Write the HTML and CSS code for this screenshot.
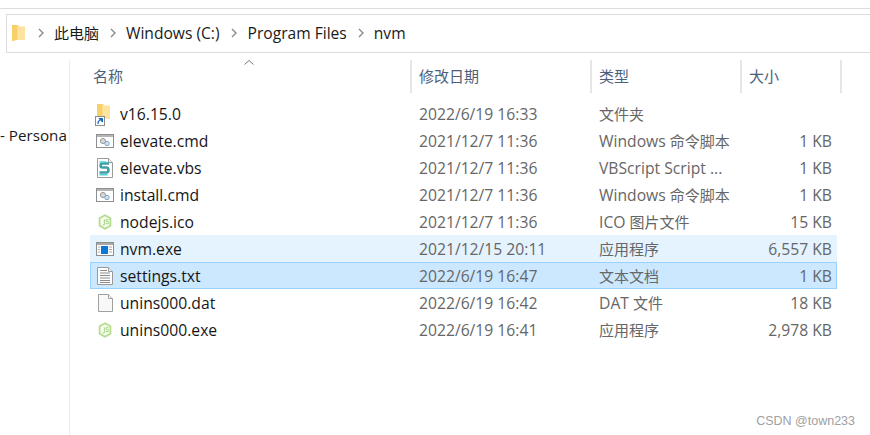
FILE: index.html
```html
<!DOCTYPE html>
<html lang="zh-CN">
<head>
<meta charset="utf-8">
<title>nvm</title>
<link rel="stylesheet" href="styles.css">
</head>
<body>
<svg class="defs" width="0" height="0">
  <symbol id="folder" viewBox="0 0 13 16">
    <path d="M0 0h6l1.500 1.500H13V15H0z" fill="#fcdf8e"/>
    <path d="M0 0h5.500v14.500L1.500 16H0z" fill="#f8cf68"/>
    <path d="M5.500 2H13v13H5.500z" fill="#fde3a0"/>
  </symbol>
  <symbol id="cmd" viewBox="0 0 18 16">
    <rect x="0.500" y="1.500" width="17" height="13" fill="#fff" stroke="#8e8e8e"/>
    <rect x="1" y="2" width="16" height="2" fill="#b5b5b5"/>
    <circle cx="7" cy="8" r="2.600" fill="#d8d8d8" stroke="#9a9a9a"/>
    <circle cx="11" cy="10.500" r="2.200" fill="#cfe3f3" stroke="#7fa9cc"/>
  </symbol>
  <symbol id="vbs" viewBox="0 0 16 20">
    <path d="M.5.500h11l4 4v15H.5z" fill="#fff" stroke="#9a9a9a"/>
    <path d="M11.500.5v4h4" fill="#eee" stroke="#9a9a9a"/>
    <path d="M12 5.500H5.500C3 5.500 3 9.500 5.500 9.500h4c2.500 0 2.500 5 0 5H2.500" fill="none" stroke="#3f9ea3" stroke-width="2.600"/>
    <path d="M2.500 4h7M2.500 16.800h8" stroke="#4fd0d4" stroke-width="1.500"/>
  </symbol>
  <symbol id="node" viewBox="0 0 16 18">
    <path d="M8 1.200l6.200 3.600v8.400L8 16.800l-6.200-3.600V4.800z" fill="#f7fbf2" stroke="#b2dc8e" stroke-width="2"/>
    <path d="M7.300 6v5.500c0 1-1.300 1.200-2 .5" fill="none" stroke="#a9d884" stroke-width="1.200"/>
    <path d="M12 6.800c-.8-1-3-1-3 .5s3 1 3 2.500-2.300 1.500-3 .5" fill="none" stroke="#a9d884" stroke-width="1.200"/>
  </symbol>
  <symbol id="exe" viewBox="0 0 18 16">
    <rect x="0.500" y="1.500" width="17" height="13" fill="#fff" stroke="#8e8e8e"/>
    <rect x="1" y="2" width="16" height="2" fill="#a8a8a8"/>
    <rect x="5" y="5" width="7" height="8" fill="#0a78d7"/>
    <path d="M2 6h2M2 8.500h2M2 11h2M13 6h3M13 8.500h3M13 11h3" stroke="#aaa"/>
  </symbol>
  <symbol id="txt" viewBox="0 0 16 18">
    <path d="M.5.500h11l4 4v13H.5z" fill="#fff" stroke="#9a9a9a"/>
    <path d="M11.500.5v4h4" fill="#eee" stroke="#9a9a9a"/>
    <path d="M3 3.500h7M3 6h10M3 8.500h10M3 11h10M3 13.500h10M3 15.500h10" stroke="#8a8a8a"/>
  </symbol>
  <symbol id="blank" viewBox="0 0 15 18">
    <path d="M.5.500h10l4 4v13H.5z" fill="#f8f8f8" stroke="#a0a0a0"/>
    <path d="M10.500.5v4h4" fill="#f2f2f2" stroke="#a0a0a0"/>
  </symbol>
</svg>

<div class="window">
  <div class="topline"></div>
  <nav class="address">
    <svg class="crumb-folder"><use href="#folder"/></svg>
    <svg class="chev" viewBox="0 0 6 10"><path d="M1 1l4 4-4 4" /></svg>
    <span class="crumb cjk">此电脑</span>
    <svg class="chev" viewBox="0 0 6 10"><path d="M1 1l4 4-4 4" /></svg>
    <span class="crumb">Windows (C:)</span>
    <svg class="chev" viewBox="0 0 6 10"><path d="M1 1l4 4-4 4" /></svg>
    <span class="crumb program">Program Files</span>
    <svg class="chev" viewBox="0 0 6 10"><path d="M1 1l4 4-4 4" /></svg>
    <span class="crumb">nvm</span>
  </nav>
  <div class="main">
    <aside class="sidebar"><div class="side-item">- Persona</div></aside>
    <section class="list">
      <div class="sort-caret"><svg viewBox="0 0 10 5"><path d="M.5 4.500L5 .5l4.500 4"/></svg></div>
      <header class="head">
        <div class="col name">名称</div>
        <div class="col">修改日期</div>
        <div class="col">类型</div>
        <div class="col">大小</div>
      </header>
      <div class="rows">
        <div class="row"><span class="fname"><span class="ico"><svg class="i-folder"><use href="#folder"/></svg><svg class="badge" viewBox="0 0 10 10"><rect x=".5" y=".5" width="9" height="9" fill="#fff" stroke="#8c8c8c"/><path d="M3 8V5.500L5 4M4 2.500h3.500V6z" fill="#1565c0" stroke="#1565c0"/></svg></span>v16.15.0</span><span class="dim">2022/6/19 16:33</span><span class="dim han">文件夹</span><span class="dim size"></span></div>
        <div class="row"><span class="fname"><span class="ico"><svg class="i-wide"><use href="#cmd"/></svg></span>elevate.cmd</span><span class="dim">2021/12/7 11:36</span><span class="dim">Windows <span class="han">命令脚本</span></span><span class="dim size">1 KB</span></div>
        <div class="row"><span class="fname"><span class="ico"><svg class="i-tall"><use href="#vbs"/></svg></span>elevate.vbs</span><span class="dim">2021/12/7 11:36</span><span class="dim">VBScript Script ...</span><span class="dim size">1 KB</span></div>
        <div class="row"><span class="fname"><span class="ico"><svg class="i-wide"><use href="#cmd"/></svg></span>install.cmd</span><span class="dim">2021/12/7 11:36</span><span class="dim">Windows <span class="han">命令脚本</span></span><span class="dim size">1 KB</span></div>
        <div class="row"><span class="fname"><span class="ico"><svg class="i-node"><use href="#node"/></svg></span>nodejs.ico</span><span class="dim">2021/12/7 11:36</span><span class="dim">ICO <span class="han">图片文件</span></span><span class="dim size">15 KB</span></div>
        <div class="row hover"><span class="fname"><span class="ico"><svg class="i-wide"><use href="#exe"/></svg></span>nvm.exe</span><span class="dim">2021/12/15 20:11</span><span class="dim han">应用程序</span><span class="dim size">6,557 KB</span></div>
        <div class="row selected"><span class="fname"><span class="ico"><svg class="i-txt"><use href="#txt"/></svg></span>settings.txt</span><span class="dim">2022/6/19 16:47</span><span class="dim han">文本文档</span><span class="dim size">1 KB</span></div>
        <div class="row"><span class="fname"><span class="ico"><svg class="i-blank"><use href="#blank"/></svg></span>unins000.dat</span><span class="dim">2022/6/19 16:42</span><span class="dim">DAT <span class="han">文件</span></span><span class="dim size">18 KB</span></div>
        <div class="row"><span class="fname"><span class="ico"><svg class="i-node"><use href="#node"/></svg></span>unins000.exe</span><span class="dim">2022/6/19 16:41</span><span class="dim han">应用程序</span><span class="dim size">2,978 KB</span></div>
      </div>
    </section>
  </div>
  <div class="watermark">CSDN @town233</div>
</div>
</body>
</html>
```

FILE: styles.css
```css
* { box-sizing: border-box; }
html, body { margin: 0; height: 100%; }
body {
  background: #fff;
  color: #1a1a1a;
  font-family: "Open Sans", "Noto Sans CJK SC", sans-serif;
  font-size: 15.7px;
  overflow: hidden;
}
.defs { position: absolute; }
.window { height: 435px; display: flex; flex-direction: column; padding-top: 8px; position: relative; }
.topline { height: 1px; background: #dcdcdc; }
.address {
  margin: 5px 0 0 6px;
  height: 39px;
  border: 1px solid #dcdcdc;
  border-right: 0;
  display: flex;
  align-items: center;
  padding: 0 0 2px 5px;
}
.crumb-folder { width: 13px; height: 16px; margin-right: 13px; }
.chev { width: 6px; height: 10px; margin-right: 10px; fill: none; stroke: #8a8a8a; stroke-width: 1.4; }
.crumb { margin-right: 11px; font-size: 15.6px; white-space: nowrap; }
.crumb.cjk { font-size: 15px; }
.crumb.program { margin-left: 1px; }
.main { flex: 1; display: flex; padding-top: 7px; min-height: 0; }
.sidebar { width: 70px; border-right: 1px solid #ececec; overflow: hidden; padding-top: 65px; flex: none; }
.side-item { white-space: nowrap; line-height: 20px; font-size: 15.2px; }
.list { flex: 1; position: relative; padding-left: 20px; }
.sort-caret { position: absolute; left: 174px; top: 0; width: 10px; height: 5px; }
.sort-caret svg { display: block; width: 10px; height: 5px; fill: none; stroke: #777; }
.head {
  display: grid;
  grid-template-columns: 322px 180px 150px 100px;
  height: 33px;
  color: #4c607a;
  font-size: 15px;
}
.col { padding: 5px 0 0 7px; border-right: 2px solid #e6e6e6; line-height: 22px; }
.col.name { padding-left: 3px; }
.rows { padding-top: 7px; padding-right: 33px; display: flex; flex-direction: column; }
.row {
  display: grid;
  grid-template-columns: 321px 180px 150px 1fr;
  height: 27px;
  align-items: center;
  border: 1px solid transparent;
  white-space: nowrap;
}
.row > span:nth-child(2), .row > span:nth-child(3) { padding-left: 7px; }
.hover { background: #e5f3ff; border-color: #e5f3ff; }
.selected { background: #cce8ff; border-color: #99d1ff; }
.fname { display: flex; align-items: center; color: #161616; padding-left: 3px; }
.ico { width: 26px; height: 20px; position: relative; display: flex; align-items: center; flex: none; }
.i-wide { width: 18px; height: 16px; margin-left: 2px; }
.i-tall { width: 16px; height: 20px; margin-left: 3px; }
.i-txt { width: 16px; height: 18px; margin-left: 3px; }
.i-blank { width: 15px; height: 18px; margin-left: 4px; }
.i-node { width: 14px; height: 16px; margin-left: 4px; }
.i-folder { width: 13px; height: 16px; margin: -3px 0 0 3px; }
.badge { position: absolute; left: 1px; bottom: -2px; width: 10px; height: 10px; }
.dim { color: #666; }
.han { font-size: 15px; }
.size { text-align: right; padding-right: 4px; }
.watermark {
  position: absolute;
  right: 15px;
  bottom: 7px;
  color: #a0a0a0;
  font-family: "Liberation Sans", sans-serif;
  font-size: 12.5px;
  line-height: 14px;
}
```
